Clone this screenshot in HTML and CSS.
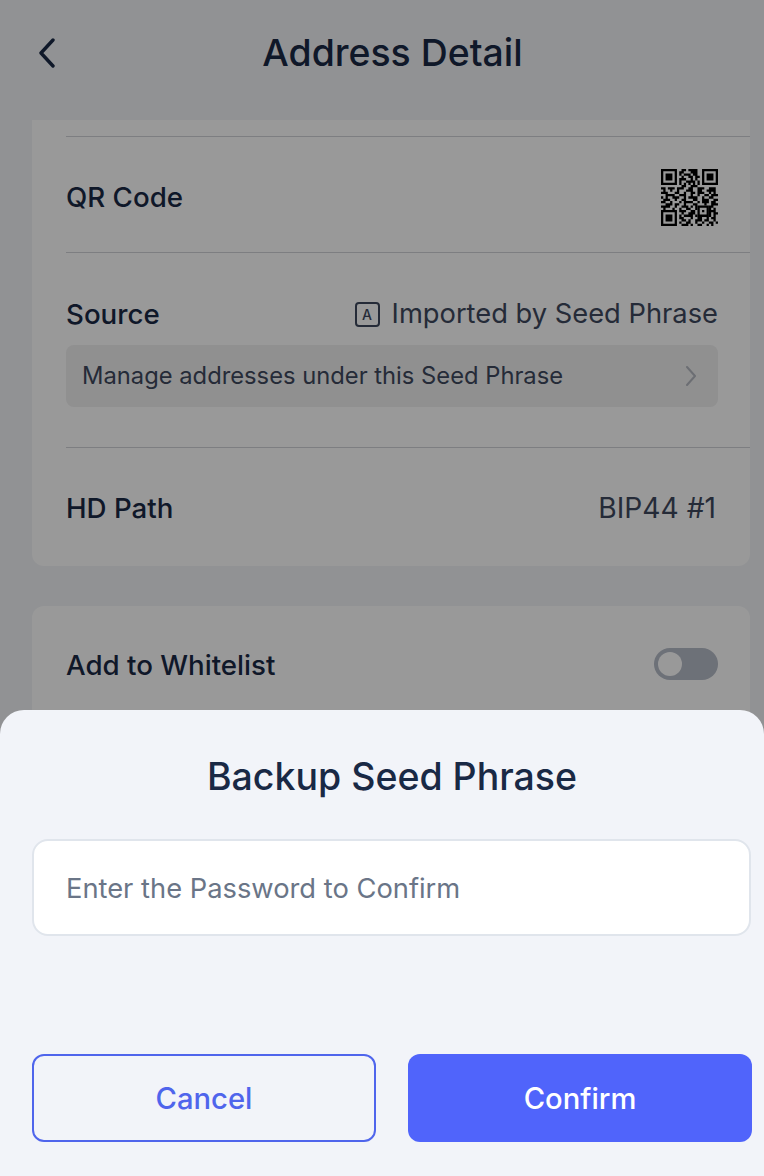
FILE: index.html
```html
<!DOCTYPE html>
<html lang="en">
<head>
<meta charset="utf-8">
<title>Address Detail</title>
<link rel="stylesheet" href="styles.css">
</head>
<body>
<div class="page">
  <header class="header">
    <svg class="back" viewBox="0 0 16 30" width="16" height="30" aria-hidden="true"><path d="M14 2 2 15l12 13" /></svg>
    <h1 class="title">Address Detail</h1>
  </header>
  <main class="content">
    <section class="card card-first">
      <div class="row row-qr">
        <span class="label">QR Code</span>
        <svg class="qr" viewBox="0 0 25 25" width="57" height="57" aria-hidden="true">
          <path class="qr-finder" d="M0 0h7v7H0zM1 1v5h5V1zM2 2h3v3H2zM18 0h7v7h-7zM19 1v5h5V1zM20 2h3v3h-3zM0 18h7v7H0zM1 19v5h5v-5zM2 20h3v3H2zM16 16h5v5h-5zM17 17v3h3v-3zM18 18h1v1h-1z"/>
          <path class="qr-data" d="M9 .5h2m1 0h4M8 1.5h2m3 0h3M8 2.5h1m1 0h3m1 0h2M9 3.5h1m2 0h2m1 0h2M8 4.5h3m2 0h1m1 0h1M8 5.5h1m2 0h4m1 0h1M8 6.5h1m1 0h1m1 0h1m1 0h1m1 0h1M9 7.5h2m2 0h3M0 8.5h2m1 0h3m1 0h3m2 0h2m2 0h3m2 0h3m1 0h1M1 9.5h1m2 0h1m2 0h1m3 0h3m2 0h2m2 0h4M0 10.5h3m3 0h2m2 0h1m2 0h2m1 0h3m2 0h1m1 0h1M2 11.5h4m2 0h3m2 0h1m2 0h1m2 0h2m1 0h3M0 12.5h1m1 0h1m2 0h3m2 0h1m1 0h4m2 0h1m2 0h2M1 13.5h3m2 0h1m2 0h2m3 0h2m2 0h3m2 0h2M0 14.5h2m2 0h1m3 0h1m1 0h4m2 0h1m1 0h3m1 0h2M2 15.5h3m1 0h2m2 0h1m3 0h2m3 0h1m2 0h3M0 16.5h4m2 0h1m2 0h3m1 0h1m1 0h1m5 0h2M1 17.5h1m3 0h1m2 0h1m2 0h2m2 0h1m5 0h1m1 0h1M8 18.5h3m2 0h2m6 0h3M9 19.5h1m2 0h3m6 0h1m1 0h2M8 20.5h1m1 0h4m1 0h1m5 0h1m1 0h1M8 21.5h2m3 0h1m2 0h2m2 0h1m1 0h2M9 22.5h2m1 0h1m2 0h3m1 0h2m2 0h1M8 23.5h1m2 0h2m2 0h1m2 0h1m2 0h2m1 0h1M9 24.5h3m1 0h1m2 0h2m2 0h1m1 0h1"/>
        </svg>
      </div>
      <div class="row row-source">
        <div class="source-top">
          <span class="label">Source</span>
          <span class="source-value">
            <span class="key-icon">A</span>
            <span class="value">Imported by Seed Phrase</span>
          </span>
        </div>
        <div class="manage">
          <span>Manage addresses under this Seed Phrase</span>
          <svg class="chev" viewBox="0 0 10 20" width="10" height="20" aria-hidden="true"><path d="M1 1l8 9-8 9"/></svg>
        </div>
      </div>
      <div class="row row-hd">
        <span class="label">HD Path</span>
        <span class="value value-path">BIP44 #1</span>
      </div>
    </section>
    <section class="card card-second">
      <div class="row row-white">
        <span class="label label-white">Add to Whitelist</span>
        <span class="switch"><span class="thumb"></span></span>
      </div>
    </section>
  </main>
  <div class="overlay"></div>
  <section class="sheet">
    <h2 class="sheet-title">Backup Seed Phrase</h2>
    <input class="password" type="password" placeholder="Enter the Password to Confirm">
    <div class="actions">
      <button class="btn btn-cancel" type="button">Cancel</button>
      <button class="btn btn-confirm" type="button">Confirm</button>
    </div>
  </section>
</div>
</body>
</html>
```
FILE: styles.css
```css
* { box-sizing: border-box; }
html, body { margin: 0; padding: 0; }
body { font-family: Inter, "Liberation Sans", sans-serif; color: #192945; background: #f2f4f7; }
.page { position: relative; width: 764px; height: 1176px; overflow: hidden; background: #f2f4f7; }

.header { position: relative; height: 120px; display: flex; align-items: flex-start; justify-content: center; padding: 29px 0 0 21px; }
.back { position: absolute; left: 39px; top: 38px; fill: none; stroke: #192945; stroke-width: 3.4; stroke-linecap: round; stroke-linejoin: round; }
.title { margin: 0; font-size: 37.4px; line-height: 48px; font-weight: 500; color: #192945; }

.content { padding: 0 14px 0 32px; display: flex; flex-direction: column; gap: 40px; }
.card { background: #fff; border-radius: 12px; }
.card-first { border-radius: 0 0 12px 12px; padding-top: 16px; height: 446px; }
.card-second { height: 300px; }

.row { margin-left: 34px; padding-right: 32px; display: flex; align-items: center; justify-content: space-between; }
.row-qr { height: 116px; border-top: 1px solid #d0d3d8; padding-top: 4px; }
.row-source { height: 195px; display: block; border-top: 1px solid #d0d3d8; padding-top: 43px; }
.row-hd { height: 119px; border-top: 1px solid #d0d3d8; padding-top: 2px; }
.row-white { height: 116px; }

.label { font-size: 27.7px; line-height: 36px; font-weight: 500; color: #192945; }
.label-white { margin-top: 1px; }
.value { font-size: 27.3px; line-height: 36px; color: #3e495e; }
.value-path { font-size: 28.2px; margin-right: 2px; }

.qr { display: block; margin-top: 1px; }
.qr-finder { fill: #000; fill-rule: evenodd; }
.qr-data { fill: none; stroke: #000; stroke-width: 1; }

.source-top { display: flex; align-items: center; justify-content: space-between; height: 36px; }
.source-value { display: flex; align-items: center; gap: 12px; }
.key-icon { width: 25px; height: 25px; border: 2px solid #3e495e; border-radius: 4px; display: flex; align-items: center; justify-content: center; font-size: 14px; font-weight: 500; color: #3e495e; }

.manage { margin-top: 13px; height: 62px; border-radius: 8px; background: #f0f0f1; padding: 0 22px 0 16px; display: flex; align-items: center; justify-content: space-between; font-size: 23.75px; color: #3e495e; }
.manage span { position: relative; top: -1px; }
.chev { fill: none; stroke: #b4b8c0; stroke-width: 2; stroke-linecap: round; stroke-linejoin: round; }

.switch { position: relative; width: 64px; height: 32px; border-radius: 16px; background: #b6bcc8; display: block; }
.thumb { position: absolute; left: 4px; top: 4px; width: 24px; height: 24px; border-radius: 50%; background: #fff; }

.overlay { position: absolute; inset: 0; background: rgba(0, 0, 0, .4); }

.sheet { position: absolute; left: 0; right: 0; top: 710px; bottom: 0; background: #f2f4f9; border-radius: 24px 24px 0 0; padding: 43px 12px 0 32px; display: flex; flex-direction: column; align-items: stretch; }
.sheet-title { margin: 0; text-align: center; font-size: 37.5px; line-height: 48px; font-weight: 500; color: #192945; }
.password { margin: 38px 1px 0 0; height: 97px; background: #fff; border: 2px solid #e0e5ec; border-radius: 16px; padding: 2px 32px 0; font: 400 27.3px Inter, sans-serif; color: #192945; outline: none; }
.password::placeholder { color: #6a7587; opacity: 1; }
.actions { margin-top: 118px; display: flex; gap: 32px; }
.btn { width: 344px; height: 88px; border-radius: 12px; font: 500 29.2px Inter, sans-serif; }
.btn-cancel { background: transparent; border: 2px solid #4f65ec; color: #4f65ec; }
.btn-confirm { background: #5064fb; border: 0; color: #fff; }
```
